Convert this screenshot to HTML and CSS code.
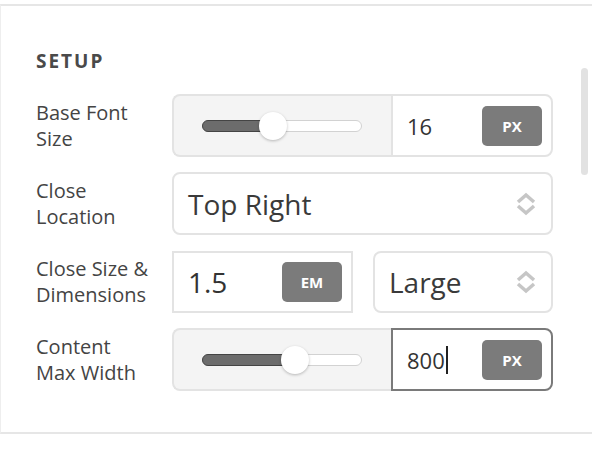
FILE: index.html
```html
<!DOCTYPE html>
<html lang="en">
<head>
  <meta charset="UTF-8">
  <title>Setup</title>
  <meta name="viewport" content="width=device-width, initial-scale=1.0">
  <link rel="stylesheet" href="styles.css">
</head>
<body>
  <div class="panel">
    <h2 class="panel-title">Setup</h2>
    <div class="fields">
      <div class="field">
        <label class="field-label">Base Font Size</label>
        <div class="combo">
          <div class="slider">
            <div class="track">
              <div class="fill" style="width: 44%"></div>
              <div class="thumb" style="left: 44%"></div>
            </div>
          </div>
          <div class="num">
            <span class="num-value">16</span>
            <span class="unit">PX</span>
          </div>
        </div>
      </div>
      <div class="field">
        <label class="field-label">Close Location</label>
        <div class="select">
          <span>Top Right</span>
          <svg class="arrows" width="22" height="26" viewBox="0 0 22 26">
            <path d="M3 11 L11 4 L19 11" />
            <path d="M3 15 L11 22 L19 15" />
          </svg>
        </div>
      </div>
      <div class="field">
        <label class="field-label">Close Size &amp; Dimensions</label>
        <div class="pair">
          <div class="num-box">
            <span class="num-big">1.5</span>
            <span class="unit">EM</span>
          </div>
          <div class="select">
            <span>Large</span>
            <svg class="arrows" width="22" height="26" viewBox="0 0 22 26">
              <path d="M3 11 L11 4 L19 11" />
              <path d="M3 15 L11 22 L19 15" />
            </svg>
          </div>
        </div>
      </div>
      <div class="field">
        <label class="field-label">Content Max Width</label>
        <div class="combo">
          <div class="slider">
            <div class="track">
              <div class="fill" style="width: 58%"></div>
              <div class="thumb" style="left: 58%"></div>
            </div>
          </div>
          <div class="num focused">
            <span class="num-value">800<span class="caret"></span></span>
            <span class="unit">PX</span>
          </div>
        </div>
      </div>
    </div>
    <div class="scrollbar"></div>
  </div>
</body>
</html>
```

FILE: styles.css
```css
body {
  margin: 0;
  background: #fff;
  font-family: "Open Sans", Arial, sans-serif;
  color: #444;
}
.panel {
  position: relative;
  margin-top: 4px;
  border-top: 2px solid #e6e6e6;
  border-bottom: 2px solid #e6e6e6;
  border-left: 1px solid #eeeeee;
  padding: 42px 0 41px 35px;
}
.panel-title {
  margin: 0 0 20px;
  font-size: 19px;
  line-height: 26px;
  font-weight: 700;
  letter-spacing: 2px;
  text-transform: uppercase;
  color: #4a4a4a;
}
.fields {
  display: flex;
  flex-direction: column;
  gap: 15px;
}
.field {
  display: flex;
  align-items: center;
  height: 63px;
}
.field-label {
  width: 136px;
  font-size: 20px;
  line-height: 26px;
  color: #444;
  padding-right: 20px;
  box-sizing: border-box;
}
.combo {
  display: flex;
  width: 381px;
  height: 63px;
}
.slider {
  width: 219px;
  box-sizing: border-box;
  background: #f4f4f4;
  border: 2px solid #e3e3e3;
  border-right: none;
  border-radius: 8px 0 0 8px;
  padding: 0 28px;
  display: flex;
  align-items: center;
}
.track {
  position: relative;
  width: 160px;
  height: 12px;
  box-sizing: border-box;
  background: #fff;
  border: 1px solid #d2d2d2;
  border-radius: 6px;
}
.fill {
  position: absolute;
  left: -1px;
  top: -1px;
  height: 12px;
  box-sizing: border-box;
  background: #6c6c6c;
  border: 1px solid #444;
  border-radius: 6px 0 0 6px;
}
.thumb {
  position: absolute;
  top: 50%;
  width: 28px;
  height: 28px;
  margin: -14px 0 0 -14px;
  background: #fff;
  border-radius: 50%;
  box-shadow: 0 1px 3px rgba(0,0,0,0.25);
}
.num {
  flex: 1;
  display: flex;
  align-items: center;
  justify-content: space-between;
  box-sizing: border-box;
  border: 2px solid #e3e3e3;
  border-radius: 0 8px 8px 0;
  padding: 0 9px 0 14px;
}
.num.focused {
  border-color: #7a7a7a;
}
.num-value {
  font-size: 22px;
  color: #333;
  display: flex;
  align-items: center;
}
.caret {
  display: inline-block;
  width: 2px;
  height: 28px;
  background: #222;
  margin-left: 1px;
}
.unit {
  width: 60px;
  height: 40px;
  border-radius: 5px;
  background: #7b7b7b;
  color: #fff;
  font-size: 15px;
  font-weight: 700;
  display: flex;
  align-items: center;
  justify-content: center;
}
.select {
  flex: 1;
  height: 63px;
  box-sizing: border-box;
  border: 2px solid #e3e3e3;
  border-radius: 8px;
  display: flex;
  align-items: center;
  justify-content: space-between;
  padding: 0 14px 0 14px;
  font-size: 28px;
  color: #3a3a3a;
}
.field > .select {
  flex: none;
  width: 381px;
}
.arrows path {
  fill: none;
  stroke: #c6c6c6;
  stroke-width: 3.5;
}
.pair {
  display: flex;
  gap: 20px;
  width: 381px;
  height: 62px;
}
.pair .select {
  height: 62px;
}
.num-box {
  width: 181px;
  box-sizing: border-box;
  border: 2px solid #e3e3e3;
  display: flex;
  align-items: center;
  justify-content: space-between;
  padding: 0 9px 0 14px;
}
.num-big {
  font-size: 28px;
  color: #333;
}
.scrollbar {
  position: absolute;
  right: 4px;
  top: 62px;
  width: 7px;
  height: 107px;
  border-radius: 4px;
  background: #e2e2e2;
}
```
